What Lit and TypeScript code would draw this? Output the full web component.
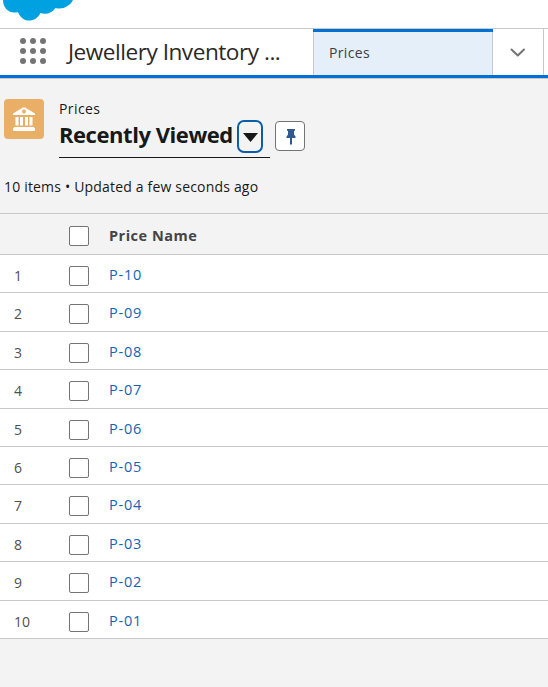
import { LitElement, html, css, svg } from "lit";
import { customElement } from "lit/decorators.js";

const rows = ["P-10", "P-09", "P-08", "P-07", "P-06", "P-05", "P-04", "P-03", "P-02", "P-01"];
const grid = [3, 13, 23];

@customElement("app-root")
export class AppRoot extends LitElement {
  static styles = css`
    :host { display: block; height: 687px; overflow: hidden; background: #f3f3f3; color: #181818;
      font-family: "Open Sans", "Noto Sans", sans-serif; font-size: 14px; line-height: 20px; white-space: nowrap; }
    * { box-sizing: border-box; }
    svg { display: block; }
    .brand { height: 29px; background: #fff; border-bottom: 1px solid #c9c9c9; }
    .nav { display: flex; height: 50px; background: #fff; border-bottom: 1px solid #c9c9c9; box-shadow: inset 0 -3px #0070d2; padding-bottom: 3px; }
    .launcher { width: 68px; padding: 9px 0 0 20px; }
    .app { width: 245px; font-size: 22.6px; line-height: 46px; color: #2b2826; letter-spacing: -0.48px; }
    .tab { width: 180px; padding: 14px 0 0 16px; color: #3e3e3c; letter-spacing: 0.35px;
      background: linear-gradient(#0070d2, #0070d2) top / 100% 3px no-repeat,
        linear-gradient(90deg, #c9c9c9 1px, #e5effa 1px, #e5effa 179px, #c9c9c9 179px); }
    .more { width: 51px; border-right: 1px solid #c9c9c9; padding: 19px 0 0 17px; }
    .head { display: flex; height: 79px; padding: 20px 0 0 4px; }
    .tile { width: 40px; height: 40px; border-radius: 4px; background: #e9af67; padding: 8px; }
    .titles { width: 211px; height: 59px; margin-left: 15px; border-bottom: 1px solid #181818; }
    .object { height: 20px; letter-spacing: 0.4px; }
    .view { display: flex; height: 35px; align-items: center; }
    .name { width: 178px; font-size: 22px; font-weight: 700; line-height: 32px; letter-spacing: -0.45px; padding-bottom: 5px; }
    .drop { width: 26px; height: 33px; border: 2px solid #0b5cab; border-radius: 7px; padding: 11px 0 0 4px; }
    .pin { width: 30px; height: 30px; margin: 22px 0 0 5px; border: 1px solid #747474; border-radius: 4px; background: #fff; padding: 6px 0 0 10px; }
    .meta { height: 55px; padding: 19px 0 0 4px; letter-spacing: 0.18px; }
    .thead { height: 42px; border: solid #c9c9c9; border-width: 1px 0; padding-top: 12px; }
    .row { height: 38.4px; background: #fff; border-bottom: 1px solid #c9c9c9; padding-top: 11px; }
    .thead, .row { display: flex; }
    .num { width: 69px; padding-left: 14px; color: #514f4d; }
    .box { width: 20px; height: 20px; border: 1px solid #747474; border-radius: 2px; background: #fff; margin-right: 20px; }
    .link { color: #1763b3; margin-top: -1px; font-size: 14.5px; letter-spacing: 0.8px; }
    .th { font-weight: 700; color: #444; font-size: 14.5px; letter-spacing: 0.5px; }
  `;

  render() {
    return html`
      <div class="brand">
        <svg width="80" height="22" viewBox="0 0 80 22" fill="#00a1e0"><path d="M3 0C3 8 9 13 15 12.500L18 12.200C20 17 24 20.500 29 20.500C34 20.500 38 18 40.500 13C46 15 52 13 55.500 8C63 10 70 6 73 0Z"/></svg>
      </div>
      <div class="nav">
        <div class="launcher">
          <svg width="27" height="27" fill="#747474">${grid.map((y) => grid.map((x) => svg`<circle cx=${x} cy=${y} r="3"></circle>`))}</svg>
        </div>
        <div class="app">Jewellery Inventory ...</div>
        <div class="tab">Prices</div>
        <div class="more"><svg width="16" height="10" fill="none" stroke="#747474" stroke-width="2" stroke-linecap="round" stroke-linejoin="round"><path d="M1.500 1.500L7.800 7.500L14 1.500"/></svg></div>
      </div>
      <div class="head">
        <div class="tile"><svg width="24" height="24" fill="#fff"><path fill-rule="evenodd" d="M1 6.500L11 .400Q12 -.100 13 .400L23 6.500V8H1ZM12 2.600A2 2 0 1 0 12 6.600A2 2 0 1 0 12 2.600Z"/><path d="M3.500 10H6.500V18.500H3.500ZM8 10H11V18.500H8ZM13 10H16V18.500H13ZM17.500 10H20.500V18.500H17.500ZM2.500 20H21.500L23 21.500V23.200Q23 24 22 24H2Q1 24 1 23.200V21.500Z"/></svg></div>
        <div class="titles">
          <div class="object">Prices</div>
          <div class="view">
            <div class="name">Recently Viewed</div>
            <div class="drop"><svg width="15" height="9" fill="#181818"><path d="M0 0H15L7.500 9Z"/></svg></div>
          </div>
        </div>
        <div class="pin"><svg width="10" height="17" fill="#31598f"><path d="M1 1H9V2.500L8 3V6.500L9.500 8.500V10H6V16.500H4V10H.500V8.500L2 6.500V3L1 2.500Z"/></svg></div>
      </div>
      <div class="meta">10 items • Updated a few seconds ago</div>
      <div class="thead"><div class="num"></div><div class="box"></div><div class="th">Price Name</div></div>
      ${rows.map((name, i) => html`<div class="row"><div class="num">${i + 1}</div><div class="box"></div><div class="link">${name}</div></div>`)}
    `;
  }
}
